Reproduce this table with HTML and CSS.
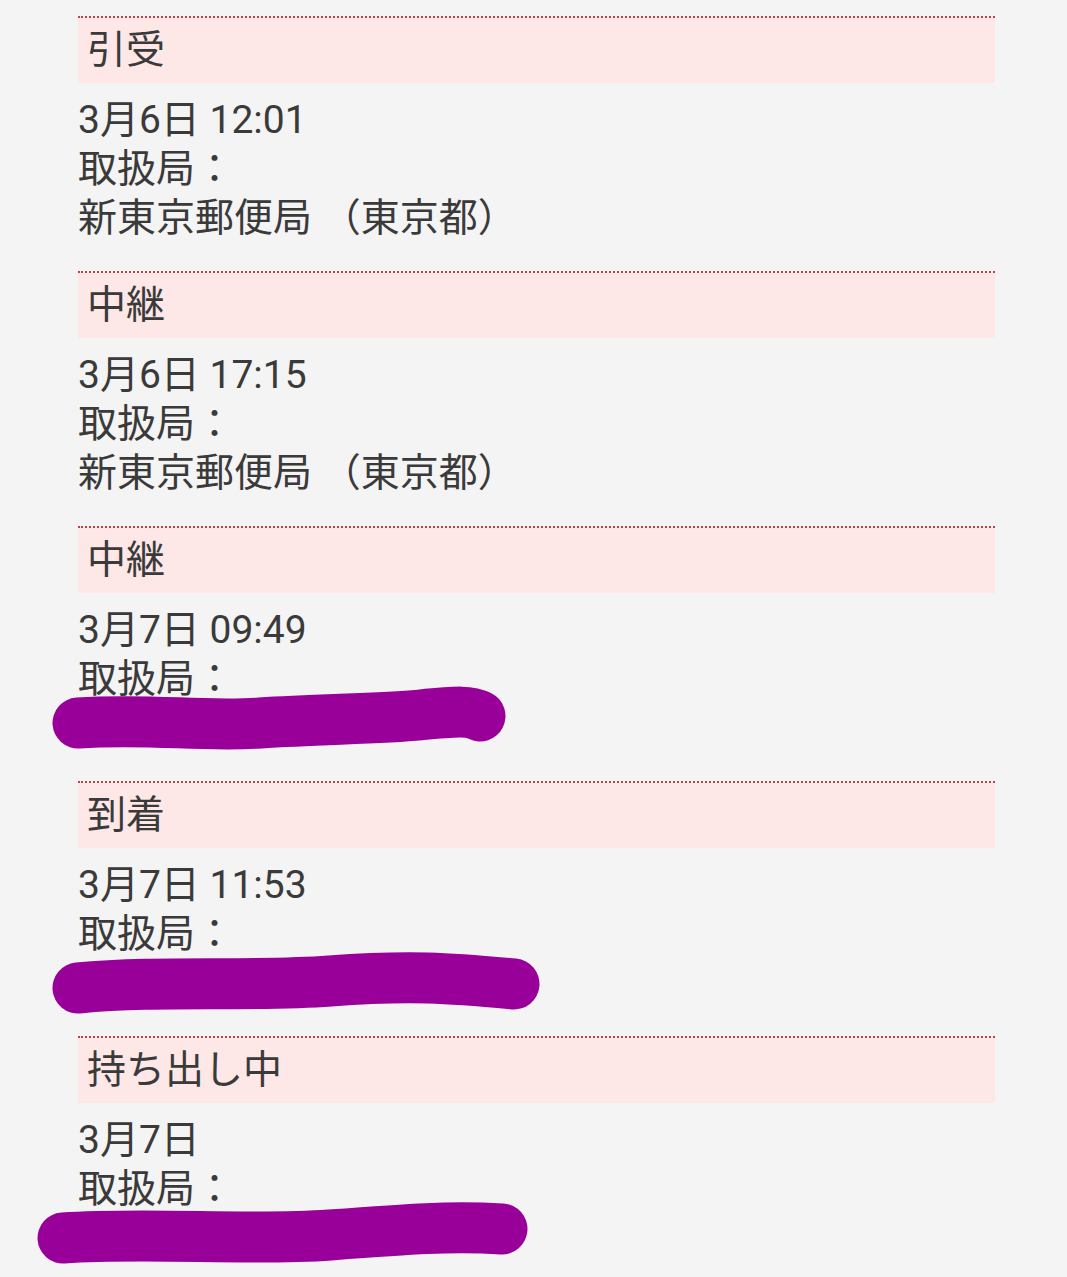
FILE: index.html
```html
<!DOCTYPE html>
<html lang="ja">
<head>
<meta charset="utf-8">
<title>追跡</title>
<link rel="stylesheet" href="styles.css">
</head>
<body>
<main class="list">
  <section class="event">
    <h2 class="event-title">引受</h2>
    <div class="event-body">
      <p>3月6日 12:01</p>
      <p>取扱局：</p>
      <p>新東京郵便局 （東京都）</p>
    </div>
  </section>
  <section class="event">
    <h2 class="event-title">中継</h2>
    <div class="event-body">
      <p>3月6日 17:15</p>
      <p>取扱局：</p>
      <p>新東京郵便局 （東京都）</p>
    </div>
  </section>
  <section class="event">
    <h2 class="event-title">中継</h2>
    <div class="event-body">
      <p>3月7日 09:49</p>
      <p>取扱局：</p>
      <p>〇〇郵便局</p>
    </div>
  </section>
  <section class="event">
    <h2 class="event-title">到着</h2>
    <div class="event-body">
      <p>3月7日 11:53</p>
      <p>取扱局：</p>
      <p>〇〇郵便局</p>
    </div>
  </section>
  <section class="event">
    <h2 class="event-title">持ち出し中</h2>
    <div class="event-body">
      <p>3月7日</p>
      <p>取扱局：</p>
      <p>〇〇郵便局</p>
    </div>
  </section>
</main>
<svg class="scribbles" width="1067" height="1277" viewBox="0 0 1067 1277" aria-hidden="true">
  <path d="M78 723 C 150 718, 200 727, 260 723 S 380 719, 420 715 S 470 711, 480 716"/>
  <path d="M78 988 C 160 980, 250 987, 330 981 S 450 978, 514 984"/>
  <path d="M63 1238 C 150 1232, 250 1241, 330 1235 S 450 1226, 502 1229"/>
</svg>
</body>
</html>
```

FILE: styles.css
```css
html, body {
  margin: 0;
  padding: 0;
  background: #f4f4f4;
}

body {
  position: relative;
  width: 1067px;
  height: 1277px;
  overflow: hidden;
  font-family: Roboto, "Noto Sans CJK JP", sans-serif;
  color: #3a3a3a;
}

.list {
  margin: 0 0 0 78px;
  padding-top: 16px;
  width: 917px;
  display: flex;
  flex-direction: column;
}

.event {
  border-top: 2px dotted #c23f44;
  height: 255px;
  box-sizing: border-box;
}

.event-title {
  margin: 0;
  height: 65px;
  line-height: 65px;
  padding-left: 9px;
  background: #fde7e7;
  font-size: 39px;
  font-weight: 400;
  color: #3a3a3a;
}

.event-body {
  padding-top: 13px;
}

.event-body p {
  margin: 0;
  font-size: 39px;
  line-height: 49px;
  white-space: nowrap;
}

.scribbles {
  position: absolute;
  left: 0;
  top: 0;
  pointer-events: none;
}

.scribbles path {
  fill: none;
  stroke: #990099;
  stroke-width: 51;
  stroke-linecap: round;
  stroke-linejoin: round;
}
```
